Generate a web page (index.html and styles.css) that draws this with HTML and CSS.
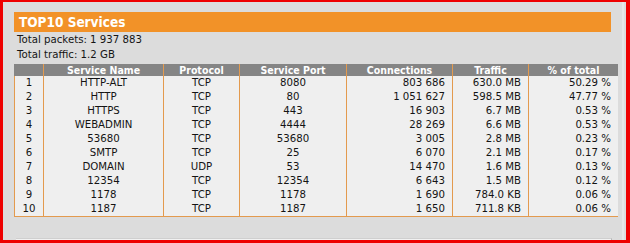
FILE: index.html
```html
<!DOCTYPE html>
<html>
<head>
<meta charset="utf-8">
<link rel="stylesheet" href="styles.css">
</head>
<body>
<div class="frame">
  <div class="panel">
    <div class="title">TOP10 Services</div>
    <div class="info">Total packets: 1 937 883</div>
    <div class="info">Total traffic: 1.2 GB</div>
    <table class="grid">
      <thead>
        <tr><th class="c-no"></th><th class="c-name">Service Name</th><th class="c-proto">Protocol</th><th class="c-port">Service Port</th><th class="c-conn">Connections</th><th class="c-traf">Traffic</th><th class="c-pct">% of total</th></tr>
      </thead>
      <tbody>
        <tr><td class="ctr">1</td><td class="ctr">HTTP-ALT</td><td class="ctr">TCP</td><td class="ctr">8080</td><td class="num">803 686</td><td class="num">630.0 MB</td><td class="num">50.29 %</td></tr>
        <tr><td class="ctr">2</td><td class="ctr">HTTP</td><td class="ctr">TCP</td><td class="ctr">80</td><td class="num">1 051 627</td><td class="num">598.5 MB</td><td class="num">47.77 %</td></tr>
        <tr><td class="ctr">3</td><td class="ctr">HTTPS</td><td class="ctr">TCP</td><td class="ctr">443</td><td class="num">16 903</td><td class="num">6.7 MB</td><td class="num">0.53 %</td></tr>
        <tr><td class="ctr">4</td><td class="ctr">WEBADMIN</td><td class="ctr">TCP</td><td class="ctr">4444</td><td class="num">28 269</td><td class="num">6.6 MB</td><td class="num">0.53 %</td></tr>
        <tr><td class="ctr">5</td><td class="ctr">53680</td><td class="ctr">TCP</td><td class="ctr">53680</td><td class="num">3 005</td><td class="num">2.8 MB</td><td class="num">0.23 %</td></tr>
        <tr><td class="ctr">6</td><td class="ctr">SMTP</td><td class="ctr">TCP</td><td class="ctr">25</td><td class="num">6 070</td><td class="num">2.1 MB</td><td class="num">0.17 %</td></tr>
        <tr><td class="ctr">7</td><td class="ctr">DOMAIN</td><td class="ctr">UDP</td><td class="ctr">53</td><td class="num">14 470</td><td class="num">1.6 MB</td><td class="num">0.13 %</td></tr>
        <tr><td class="ctr">8</td><td class="ctr">12354</td><td class="ctr">TCP</td><td class="ctr">12354</td><td class="num">6 643</td><td class="num">1.5 MB</td><td class="num">0.12 %</td></tr>
        <tr><td class="ctr">9</td><td class="ctr">1178</td><td class="ctr">TCP</td><td class="ctr">1178</td><td class="num">1 690</td><td class="num">784.0 KB</td><td class="num">0.06 %</td></tr>
        <tr><td class="ctr">10</td><td class="ctr">1187</td><td class="ctr">TCP</td><td class="ctr">1187</td><td class="num">1 650</td><td class="num">711.8 KB</td><td class="num">0.06 %</td></tr>
      </tbody>
    </table>
  </div>
  <div class="next"></div>
</div>
</body>
</html>
```
FILE: styles.css
```css
html, body { margin: 0; padding: 0; }
body {
  width: 630px;
  height: 243px;
  overflow: hidden;
  font-family: "DejaVu Sans", sans-serif;
  font-size: 10px;
  color: #141414;
}
.frame {
  box-sizing: border-box;
  width: 630px;
  height: 243px;
  border-style: solid;
  border-color: #ee0000;
  border-width: 2px 4px 3px 3px;
  background: #dcdcdc;
  padding: 10px 0 0 11px;
  overflow: hidden;
  position: relative;
}
.frame::after {
  content: "";
  position: absolute;
  top: 0;
  right: 2px;
  bottom: 0;
  width: 2px;
  background: #e6e6e6;
}
.panel {
  width: 597px;
}
.title {
  background: #f29228;
  color: #ffffff;
  font-family: "DejaVu Sans Condensed", "DejaVu Sans", sans-serif;
  font-weight: bold;
  font-size: 13.5px;
  height: 20px;
  line-height: 20px;
  padding-left: 5px;
}
.info {
  height: 15px;
  line-height: 16px;
  padding-left: 3px;
  font-size: 10.2px;
}
.info + .info { height: 16px; }
.grid {
  width: 597px;
  border-collapse: collapse;
  table-layout: fixed;
  margin-top: 1px;
  background: #efefef;
}
.grid th {
  background: #858585;
  color: #ffffff;
  font-family: "DejaVu Sans Condensed", "DejaVu Sans", sans-serif;
  font-weight: bold;
  height: 12px;
  line-height: 12px;
  padding: 0;
  border-left: 1px solid #e39a4e;
  font-size: 10.5px;
}
.grid th:first-child { border-left: 1px solid #858585; }
.grid td {
  height: 14px;
  line-height: 14px;
  padding: 0;
  border-left: 1px solid #e39a4e;
  font-size: 10.2px;
}
.grid tbody tr:last-child td { border-bottom: 1px solid #e39a4e; }
.ctr { text-align: center; }
.num { text-align: right; padding-right: 7px !important; }
.c-no { width: 28px; }
.c-name { width: 119px; }
.c-proto { width: 75px; }
.c-port { width: 106px; }
.c-conn { width: 105px; }
.c-traf { width: 75px; }
.c-pct { width: 89px; }
.next {
  margin: 21px 0 0 2px;
  width: 595px;
  height: 10px;
  background: #f2f2f2;
  border-top: 1px solid #cfcfcf;
  border-right: 1px solid #b8b8b8;
}
```
